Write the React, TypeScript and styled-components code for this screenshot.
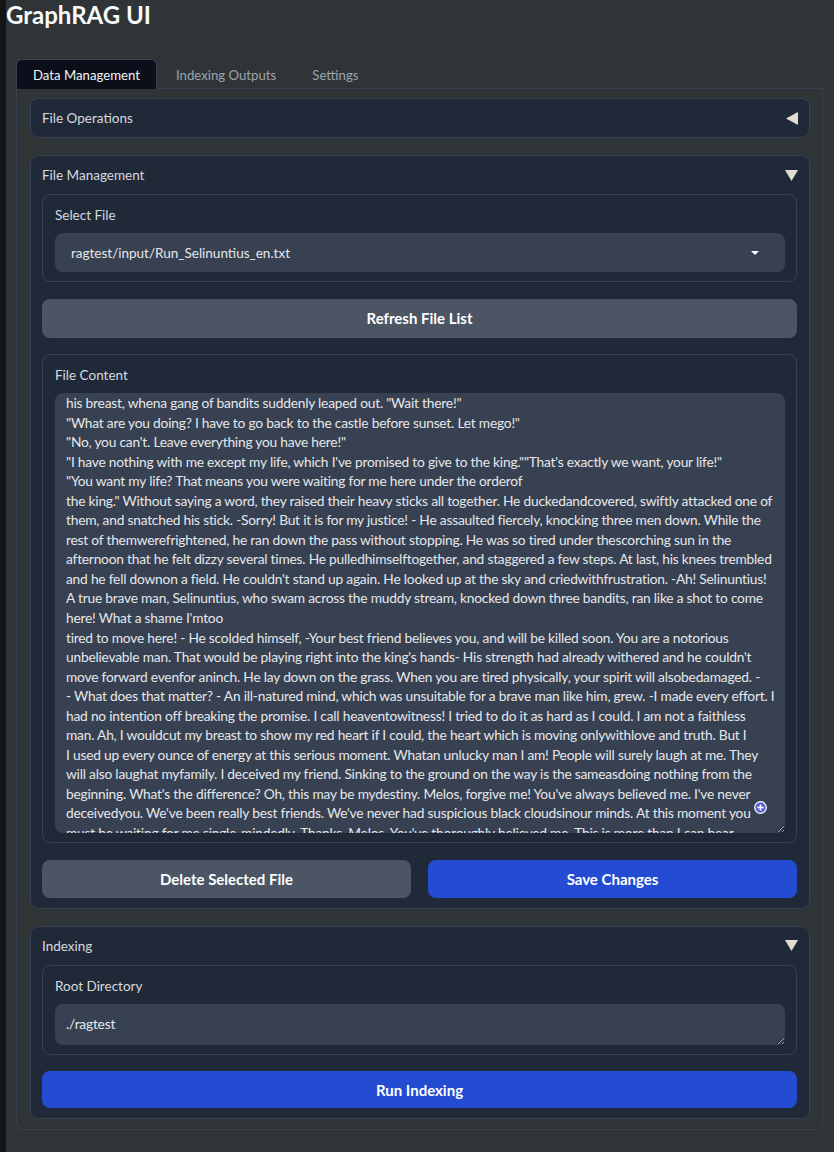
import React from "react";
import styled, { createGlobalStyle } from "styled-components";

const Global = createGlobalStyle`
  html, body { margin: 0; padding: 0; background: #2f3537; }
  body { font-family: Lato, "Noto Sans", sans-serif; color: #e5e7eb; }
  * { box-sizing: border-box; }
`;

const Shell = styled.div`
  display: flex;
  min-height: 1152px;
`;

const Gutter = styled.div`
  width: 6px;
  flex: none;
  background: #141414;
`;

const Main = styled.main`
  flex: 1;
  min-width: 0;
  padding: 0 11px 20px 0;
`;

const Title = styled.h1`
  margin: 0;
  font-size: 24px;
  line-height: 30px;
  font-weight: 700;
  color: #f9fafb;
`;

const Tabs = styled.div`
  margin: 29px 0 0 10px;
`;

const TabBar = styled.div`
  display: flex;
  gap: 2px;
  position: relative;
  z-index: 1;
`;

const Tab = styled.button<{ $active?: boolean }>`
  height: 30px;
  margin-bottom: -1px;
  padding: 0 16px;
  font-family: inherit;
  font-size: 13.2px;
  line-height: 28px;
  border: 1px solid ${(p) => (p.$active ? "#374151" : "transparent")};
  border-bottom: none;
  border-radius: 6px 6px 0 0;
  background: ${(p) => (p.$active ? "#0b0f19" : "transparent")};
  color: ${(p) => (p.$active ? "#f3f4f6" : "#9ca3af")};
  cursor: pointer;
`;

const Panel = styled.section`
  border: 1px solid #374151;
  border-radius: 0 0 8px 8px;
  padding: 9px 12px 10px 13px;
  display: flex;
  flex-direction: column;
  gap: 17px;
`;

const Accordion = styled.div`
  background: #1f2937;
  border: 1px solid #374151;
  border-radius: 8px;
`;

const AccordionHeader = styled.div`
  display: flex;
  align-items: center;
  justify-content: space-between;
  padding: 10px 11px 10px 11px;
  font-size: 13.5px;
  line-height: 18px;
  color: #d6dae0;
`;

const AccordionBody = styled.div`
  display: flex;
  flex-direction: column;
  gap: 16.5px;
  padding: 0 12px 10px 11px;
`;

const Block = styled.div`
  border: 1px solid #374151;
  border-radius: 8px;
  padding: 10px 11px 9px 12px;
  display: flex;
  flex-direction: column;
  gap: 8px;
`;

const Label = styled.span`
  font-size: 13.5px;
  line-height: 20px;
  color: #d6dae0;
`;

const Select = styled.div`
  height: 39px;
  background: #374151;
  border-radius: 8px;
  padding: 0 26px 0 16px;
  display: flex;
  align-items: center;
  justify-content: space-between;
  font-size: 13.5px;
  color: #e5e7eb;
`;

const Button = styled.button<{ $primary?: boolean; $h?: number }>`
  height: ${(p) => p.$h ?? 39}px;
  width: 100%;
  border: none;
  border-radius: 8px;
  font-family: inherit;
  font-weight: 700;
  font-size: 15px;
  color: #ffffff;
  background: ${(p) => (p.$primary ? "#234cd3" : "#4b5563")};
  cursor: pointer;
`;

const ButtonRow = styled.div`
  display: grid;
  grid-template-columns: 1fr 1fr;
  gap: 17px;
`;

const AreaWrap = styled.div`
  position: relative;
`;

const Area = styled.textarea<{ $h: number; $pt?: number }>`
  display: block;
  width: 100%;
  height: ${(p) => p.$h}px;
  background: #374151;
  border: none;
  outline: none;
  border-radius: 8px;
  padding: ${(p) => p.$pt ?? 0}px 10px 0 11px;
  font-family: Lato, "Noto Sans", sans-serif;
  font-size: 13.75px;
  letter-spacing: -0.21px;
  line-height: 19.55px;
  color: #e5e7eb;
  white-space: pre;
  overflow: hidden;
  resize: vertical;
`;

const Badge = styled.svg`
  position: absolute;
  right: 18px;
  bottom: 19px;
  width: 13px;
  height: 13px;
`;

const Arrow = ({ open }: { open: boolean }) =>
  open ? (
    <svg width="13" height="11" viewBox="0 0 13 11">
      <polygon points="0,0 13,0 6.5,11" fill="#e2dcd3" />
    </svg>
  ) : (
    <svg width="12" height="13" viewBox="0 0 12 13">
      <polygon points="12,0 12,13 0,6.5" fill="#e2dcd3" />
    </svg>
  );

const Caret = () => (
  <svg width="8" height="4" viewBox="0 0 8 4">
    <polygon points="0,0 8,0 4,4" fill="#ffffff" />
  </svg>
);

const fileText = [
  'his breast, whena gang of bandits suddenly leaped out. "Wait there!"',
  '"What are you doing? I have to go back to the castle before sunset. Let mego!"',
  '"No, you can\'t. Leave everything you have here!"',
  '"I have nothing with me except my life, which I\'ve promised to give to the king.""That\'s exactly we want, your life!"',
  '"You want my life? That means you were waiting for me here under the orderof',
  'the king." Without saying a word, they raised their heavy sticks all together. He duckedandcovered, swiftly attacked one of',
  "them, and snatched his stick. -Sorry! But it is for my justice! - He assaulted fiercely, knocking three men down. While the",
  "rest of themwerefrightened, he ran down the pass without stopping. He was so tired under thescorching sun in the",
  "afternoon that he felt dizzy several times. He pulledhimselftogether, and staggered a few steps. At last, his knees trembled",
  "and he fell downon a field. He couldn't stand up again. He looked up at the sky and criedwithfrustration. -Ah! Selinuntius!",
  "A true brave man, Selinuntius, who swam across the muddy stream, knocked down three bandits, ran like a shot to come",
  "here! What a shame I'mtoo",
  "tired to move here! - He scolded himself, -Your best friend believes you, and will be killed soon. You are a notorious",
  "unbelievable man. That would be playing right into the king's hands- His strength had already withered and he couldn't",
  "move forward evenfor aninch. He lay down on the grass. When you are tired physically, your spirit will alsobedamaged. -",
  "- What does that matter? - An ill-natured mind, which was unsuitable for a brave man like him, grew. -I made every effort. I",
  "had no intention off breaking the promise. I call heaventowitness! I tried to do it as hard as I could. I am not a faithless",
  "man. Ah, I wouldcut my breast to show my red heart if I could, the heart which is moving onlywithlove and truth. But I",
  "I used up every ounce of energy at this serious moment. Whatan unlucky man I am! People will surely laugh at me. They",
  "will also laughat myfamily. I deceived my friend. Sinking to the ground on the way is the sameasdoing nothing from the",
  "beginning. What's the difference? Oh, this may be mydestiny. Melos, forgive me! You've always believed me. I've never",
  "deceivedyou. We've been really best friends. We've never had suspicious black cloudsinour minds. At this moment you",
  "must be waiting for me single-mindedly. Thanks, Melos. You've thoroughly believed me. This is more than I can bear",
  "so much. You are my friend. I am a faithless man.",
].join("\n");

export default function App() {
  return (
    <>
      <Global />
      <Shell>
        <Gutter />
        <Main>
          <Title>GraphRAG UI</Title>
          <Tabs>
            <TabBar>
              <Tab $active>Data Management</Tab>
              <Tab>Indexing Outputs</Tab>
              <Tab>Settings</Tab>
            </TabBar>
            <Panel>
              <Accordion>
                <AccordionHeader>
                  <span>File Operations</span>
                  <Arrow open={false} />
                </AccordionHeader>
              </Accordion>

              <Accordion>
                <AccordionHeader>
                  <span>File Management</span>
                  <Arrow open />
                </AccordionHeader>
                <AccordionBody>
                  <Block>
                    <Label>Select File</Label>
                    <Select>
                      <span>ragtest/input/Run_Selinuntius_en.txt</span>
                      <Caret />
                    </Select>
                  </Block>
                  <Button>Refresh File List</Button>
                  <Block>
                    <Label>File Content</Label>
                    <AreaWrap>
                      <Area $h={440} defaultValue={fileText} spellCheck={false} />
                      <Badge viewBox="0 0 13 13">
                        <circle cx="6.5" cy="6.5" r="5.8" fill="#5a63d8" stroke="#ffffff" strokeWidth="1.2" />
                        <path d="M6.5 3.4v6.2M3.4 6.5h6.2" stroke="#ffffff" strokeWidth="1.6" />
                      </Badge>
                    </AreaWrap>
                  </Block>
                  <ButtonRow>
                    <Button $h={38}>Delete Selected File</Button>
                    <Button $h={38} $primary>
                      Save Changes
                    </Button>
                  </ButtonRow>
                </AccordionBody>
              </Accordion>

              <Accordion>
                <AccordionHeader>
                  <span>Indexing</span>
                  <Arrow open />
                </AccordionHeader>
                <AccordionBody>
                  <Block>
                    <Label>Root Directory</Label>
                    <Area $h={41} $pt={10} defaultValue="./ragtest" spellCheck={false} />
                  </Block>
                  <Button $h={37} $primary>
                    Run Indexing
                  </Button>
                </AccordionBody>
              </Accordion>
            </Panel>
          </Tabs>
        </Main>
      </Shell>
    </>
  );
}
